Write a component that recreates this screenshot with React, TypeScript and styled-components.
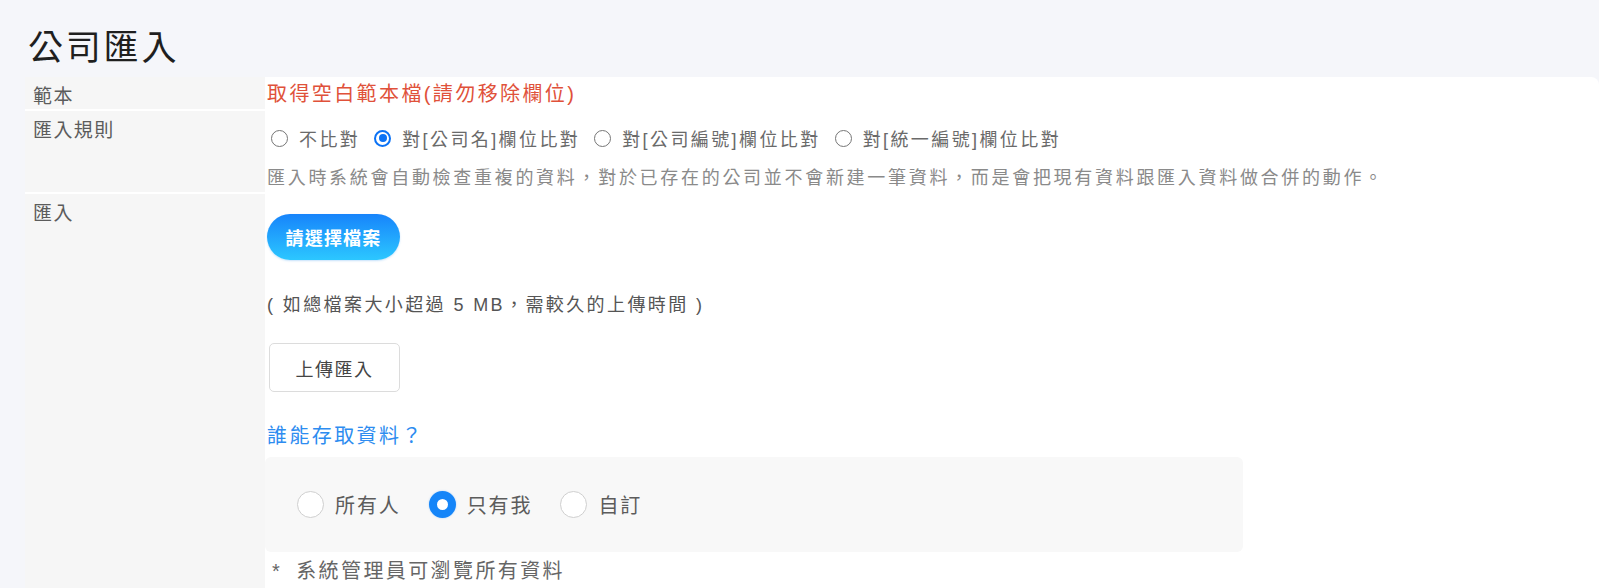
import React from "react";
import styled, { createGlobalStyle, css } from "styled-components";

const GlobalStyle = createGlobalStyle`
  html, body {
    margin: 0;
    padding: 0;
    background: #f5f6fa;
  }
  body {
    font-family: "Liberation Sans", "Noto Sans CJK TC", sans-serif;
    color: #555;
  }
  * { box-sizing: border-box; }
`;

const Page = styled.div`
  min-height: 100vh;
  padding: 27px 0 0 25px;
  display: flex;
  flex-direction: column;
`;

const Title = styled.h1`
  margin: 0 0 9px 3px;
  font-size: 35px;
  line-height: 41px;
  letter-spacing: 2.8px;
  font-weight: 400;
  color: #1f1f1f;
`;

const Panel = styled.div`
  flex: 1;
  display: flex;
  flex-direction: column;
  background: #fff;
  border-top-right-radius: 8px;
`;

const FormRow = styled.div<{ $grow?: boolean }>`
  display: grid;
  grid-template-columns: 240px 1fr;
  ${(p) => p.$grow && css`flex: 1;`}
`;

const LabelCell = styled.div<{ $last?: boolean }>`
  background: #f6f6f6;
  padding: 8px 0 0 8px;
  font-size: 19px;
  line-height: 24px;
  letter-spacing: 1.4px;
  color: #5c5c5c;
  border-bottom: ${(p) => (p.$last ? "none" : "2px solid #fff")};
`;

const ContentCell = styled.div<{ $pt: number; $pb?: number }>`
  display: flex;
  flex-direction: column;
  align-items: flex-start;
  padding: ${(p) => p.$pt}px 0 ${(p) => p.$pb ?? 0}px 2px;
`;

const TemplateLink = styled.a`
  font-size: 20px;
  line-height: 30px;
  letter-spacing: 2.4px;
  color: #e0513a;
  text-decoration: none;
  cursor: pointer;
`;

const RuleOptions = styled.div`
  display: flex;
  align-items: center;
  height: 28px;
  padding-left: 4px;
`;

const RuleOption = styled.label`
  display: flex;
  align-items: center;
  gap: 11px;
  margin-right: 14px;
  font-size: 18px;
  letter-spacing: 2.4px;
  color: #6a6a6a;
  cursor: pointer;
`;

const SmallRadio = styled.input.attrs({ type: "radio" })`
  appearance: none;
  margin: 0;
  width: 17px;
  height: 17px;
  border-radius: 50%;
  border: 1.5px solid #767676;
  background: #fff;
  display: grid;
  place-items: center;
  flex-shrink: 0;
  &:checked {
    border: 2px solid #0b72f5;
  }
  &:checked::after {
    content: "";
    width: 8px;
    height: 8px;
    border-radius: 50%;
    background: #0b72f5;
  }
`;

const Description = styled.p`
  margin: 12px 0 0;
  font-size: 18px;
  line-height: 28px;
  letter-spacing: 2.7px;
  color: #8a8a8a;
`;

const ChooseButton = styled.button`
  height: 46px;
  width: 133px;
  border: none;
  border-radius: 23px;
  background: linear-gradient(180deg, #1784fb 0%, #2cc7ff 100%);
  color: #fff;
  font-family: inherit;
  font-size: 18px;
  font-weight: 700;
  letter-spacing: 1.2px;
  cursor: pointer;
  box-shadow: 0 1px 2px rgba(30, 140, 240, 0.25);
`;

const Note = styled.p`
  margin: 31px 0 0;
  font-size: 18px;
  line-height: 28px;
  letter-spacing: 2.4px;
  color: #555;
`;

const UploadButton = styled.button`
  margin: 24px 0 0 2px;
  width: 131px;
  height: 49px;
  border: 1px solid #dcdcdc;
  border-radius: 5px;
  background: #fff;
  color: #444;
  font-family: inherit;
  font-size: 18px;
  letter-spacing: 1.5px;
  cursor: pointer;
`;

const AccessHeading = styled.div`
  margin-top: 30px;
  font-size: 20px;
  line-height: 28px;
  letter-spacing: 2.4px;
  color: #2d8cf0;
`;

const AccessBox = styled.div`
  margin-top: 7px;
  margin-left: -2px;
  width: 978px;
  height: 95px;
  border-radius: 6px;
  background: #f8f8f8;
  display: flex;
  align-items: center;
  padding-left: 32px;
`;

const AccessOption = styled.label`
  display: flex;
  align-items: center;
  gap: 11px;
  margin-right: 28px;
  font-size: 20px;
  letter-spacing: 1.9px;
  color: #5c5c5c;
  cursor: pointer;
`;

const BigRadio = styled.input.attrs({ type: "radio" })`
  appearance: none;
  margin: 0;
  width: 27px;
  height: 27px;
  border-radius: 50%;
  border: 1.5px solid #cfcfcf;
  background: #fff;
  flex-shrink: 0;
  &:checked {
    border: 8px solid #1585f8;
    box-shadow: 0 0 2px rgba(21, 133, 248, 0.35);
  }
`;

const Footnote = styled.div`
  margin-top: 5px;
  padding-left: 5px;
  font-size: 20px;
  line-height: 28px;
  letter-spacing: 2.4px;
  color: #666;
`;

const Star = styled.span`
  margin-right: 14px;
`;

const rules = ["不比對", "對[公司名]欄位比對", "對[公司編號]欄位比對", "對[統一編號]欄位比對"];
const access = ["所有人", "只有我", "自訂"];

export default function App() {
  return (
    <>
      <GlobalStyle />
      <Page>
        <Title>公司匯入</Title>
        <Panel>
          <FormRow>
            <LabelCell>範本</LabelCell>
            <ContentCell $pt={2} $pb={2}>
              <TemplateLink>取得空白範本檔(請勿移除欄位)</TemplateLink>
            </ContentCell>
          </FormRow>
          <FormRow>
            <LabelCell>匯入規則</LabelCell>
            <ContentCell $pt={13} $pb={2}>
              <RuleOptions>
                {rules.map((r, i) => (
                  <RuleOption key={r}>
                    <SmallRadio name="rule" defaultChecked={i === 1} />
                    {r}
                  </RuleOption>
                ))}
              </RuleOptions>
              <Description>
                匯入時系統會自動檢查重複的資料，對於已存在的公司並不會新建一筆資料，而是會把現有資料跟匯入資料做合併的動作。
              </Description>
            </ContentCell>
          </FormRow>
          <FormRow $grow>
            <LabelCell $last>匯入</LabelCell>
            <ContentCell $pt={20}>
              <ChooseButton>請選擇檔案</ChooseButton>
              <Note>( 如總檔案大小超過 5 MB，需較久的上傳時間 )</Note>
              <UploadButton>上傳匯入</UploadButton>
              <AccessHeading>誰能存取資料？</AccessHeading>
              <AccessBox>
                {access.map((a, i) => (
                  <AccessOption key={a}>
                    <BigRadio name="access" defaultChecked={i === 1} />
                    {a}
                  </AccessOption>
                ))}
              </AccessBox>
              <Footnote>
                <Star>*</Star>系統管理員可瀏覽所有資料
              </Footnote>
            </ContentCell>
          </FormRow>
        </Panel>
      </Page>
    </>
  );
}
